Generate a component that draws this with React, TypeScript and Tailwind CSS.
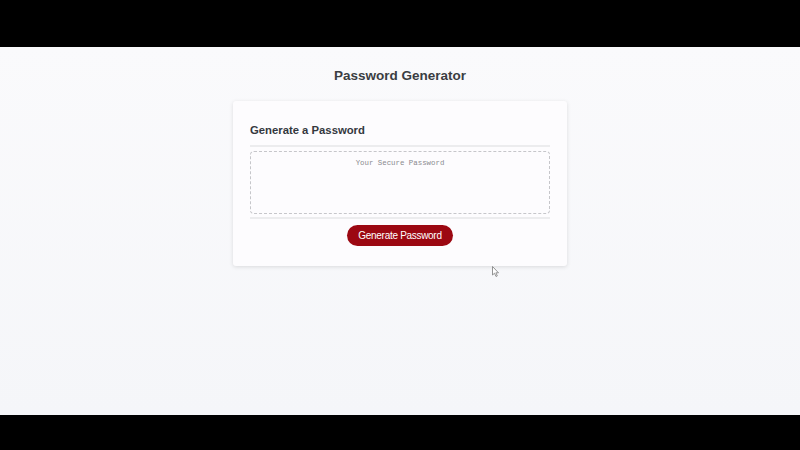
export default function App() {
  return (
    <div className="flex h-[450px] w-[800px] flex-col bg-black font-['Liberation_Sans',Arial,sans-serif]">
      <div className="h-[47px] bg-black" />
      <main className="relative flex flex-1 flex-col items-center bg-gradient-to-b from-[#fafafc] to-[#f5f6f9] pt-[20px]">
        <h1 className="text-[13.5px] font-bold leading-[18px] text-[#3a3d42]">Password Generator</h1>

        <div className="mt-[16px] w-[334px] rounded-[3px] bg-[#fdfcfe] px-[17px] pb-[20px] pt-[21px] shadow-[0_1px_4px_rgba(0,0,0,0.12)]">
          <h2 className="text-[11.3px] font-bold leading-[16px] text-[#34383e]">Generate a Password</h2>
          <div className="mt-[7px] h-[2px] bg-[#ececee]" />
          <div className="mt-[4px] h-[63px] rounded-[4px] border border-dashed border-[#c6c6ca] pt-[6px] text-center font-['Liberation_Mono','DejaVu_Sans_Mono',monospace] text-[7.4px] leading-[10px] text-[#8a8a8e]">
            Your Secure Password
          </div>
          <div className="mt-[3px] h-[2px] bg-[#ececee]" />
          <div className="mt-[6px] flex justify-center">
            <button className="h-[21px] w-[106px] rounded-full bg-[#9c0812] text-[10px] leading-none tracking-[-0.3px] text-white">
              Generate Password
            </button>
          </div>
        </div>

        <svg className="absolute left-[492px] top-[219px]" width="8" height="12" viewBox="0 0 8 12">
          <path d="M0.5 0.5 L0.5 9 L2.5 7.2 L4 10.5 L5.3 9.9 L3.9 6.8 L6.5 6.8 Z" fill="#fff" stroke="#7a7a7a" strokeWidth="0.8" />
        </svg>
      </main>
      <div className="h-[35px] bg-black" />
    </div>
  );
}
